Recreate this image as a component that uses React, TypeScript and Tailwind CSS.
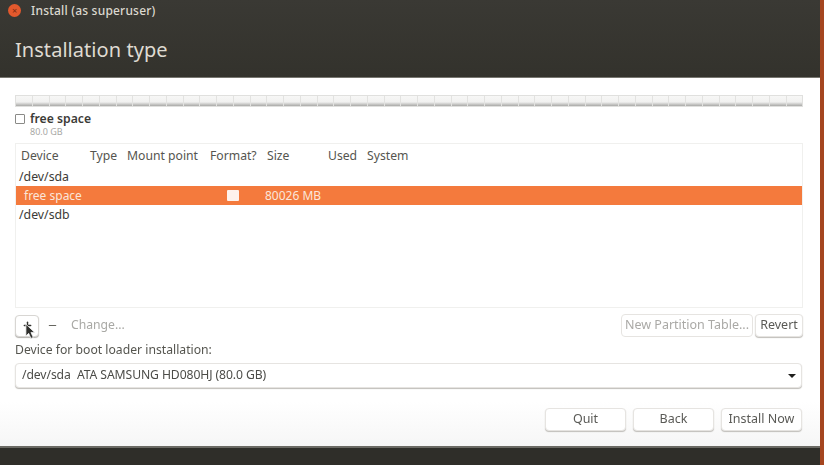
import { Plus, Minus } from "lucide-react";

const cells = Array.from({ length: 47 });

function Btn({ label, w, disabled }: { label: string; w: string; disabled?: boolean }) {
    return (
        <button className={`${w} h-[23px] rounded-[4px] border border-[#e6e4e1] bg-white text-[12.5px] leading-none shadow-[0_1px_1px_#c0beba] ${disabled ? "text-[#aaa9a6] shadow-none" : "text-[#5a5a56]"}`}>
            {label}
        </button>
    );
}

export default function App() {
    return (
        <div className="flex h-[465px] w-[824px] overflow-hidden font-['Noto_Sans',sans-serif] blur-[0.5px]">
            <div className="flex w-[820px] flex-col">
                <header className="flex h-[78px] shrink-0 flex-col border-b border-[#77766f] bg-gradient-to-b from-[#3a3934] to-[#33322c]">
                    <div className="flex h-[21px] items-center pl-[8px]">
                        <span className="flex h-[13px] w-[13px] items-center justify-center rounded-full bg-[#e2592d] text-[9px] leading-none text-[#7a2a12]">×</span>
                        <span className="ml-[10px] text-[12px] font-medium tracking-[0.2px] text-[#dcd9d0]">Install (as superuser)</span>
                    </div>
                    <h1 className="ml-[15px] mt-[16px] text-[20px] leading-[26px] tracking-[0.05px] text-[#dfdbd2]">Installation type</h1>
                </header>

                <main className="flex min-h-0 flex-1 flex-col bg-gradient-to-b from-white from-[88%] to-[#f6f6f6] px-[15px] pt-[17px]">
                    <div className="flex h-[12px] w-[788px] shrink-0 border border-[#e0e0de] bg-gradient-to-b from-[#f7f7f6] via-[#f1f1f0] via-60% to-[#a9a9a7]">
                        {cells.map((_, i) => (
                            <div key={i} className="flex-1 border-r border-[#e2e2e0] last:border-r-0" />
                        ))}
                    </div>

                    <div className="mt-[5px] flex h-[14px] items-center">
                        <span className="h-[10px] w-[10px] rounded-[1px] border border-[#8a8a87] bg-white" />
                        <span className="ml-[5px] text-[12.2px] font-semibold leading-[14px] text-[#3c3b37]">free space</span>
                    </div>
                    <div className="ml-[15px] mt-[1px] text-[9px] leading-[10px] text-[#a8a8a5]">80.0 GB</div>

                    <div className="mt-[6px] h-[165px] w-[788px] shrink-0 border border-[#f0f0ee] bg-white text-[12.2px] text-[#55554f]">
                        <div className="grid h-[21px] grid-cols-[69px_37px_83px_57px_61px_39px_1fr] items-end pl-[5px]">
                            <span>Device</span>
                            <span>Type</span>
                            <span>Mount point</span>
                            <span>Format?</span>
                            <span>Size</span>
                            <span>Used</span>
                            <span>System</span>
                        </div>
                        <div className="flex h-[21px] items-end pl-[3px] text-[12.3px] text-[#3c3b37]">/dev/sda</div>
                        <div className="grid h-[19px] grid-cols-[203px_38px_1fr] items-center bg-[#f47a3d] pl-[8px] text-[12px] text-[#fbe6da]">
                            <span>free space</span>
                            <span className="h-[11px] w-[12px] rounded-[1px] bg-white/90" />
                            <span>80026 MB</span>
                        </div>
                        <div className="flex h-[19px] items-end pl-[3px] text-[12.3px] text-[#3c3b37]">/dev/sdb</div>
                    </div>

                    <div className="mt-[6px] flex h-[23px] w-[788px] shrink-0 items-center">
                        <button className="relative flex h-[22px] w-[24px] items-center justify-center rounded-[4px] border border-[#d8d6d3] bg-white shadow-[0_1px_1px_#b5b3af]">
                            <Plus size={11} strokeWidth={3} className="text-[#33332f]" />
                            <svg viewBox="0 0 12 18" className="absolute left-[9px] top-[7px] h-[17px] w-[11px]">
                                <path d="M1 1 L1 14 L4 11 L6.5 16.5 L9 15.5 L6.5 10 L10.5 10 Z" fill="#2e2e2b" stroke="#f2f2f2" strokeWidth="0.9" />
                            </svg>
                        </button>
                        <Minus size={11} strokeWidth={2.5} className="ml-[8px] text-[#66665f]" />
                        <span className="ml-[13px] text-[12.2px] text-[#a9a9a5]">Change...</span>
                        <div className="ml-auto flex gap-[2px]">
                            <Btn label="New Partition Table..." w="w-[132px]" disabled />
                            <Btn label="Revert" w="w-[48px]" />
                        </div>
                    </div>

                    <div className="mt-[5px] text-[12.2px] leading-[16px] text-[#55554f]">Device for boot loader installation:</div>

                    <div className="mt-[5px] flex h-[25px] w-[787px] shrink-0 items-center justify-between rounded-[4px] border border-[#e6e4e1] bg-white px-[6px] shadow-[0_1px_1px_#c0beba]">
                        <span className="text-[12.2px] tracking-[-0.1px] text-[#4c4c48]">/dev/sda&nbsp; ATA SAMSUNG HD080HJ (80.0 GB)</span>
                        <span className="mr-[-1px] h-0 w-0 border-x-[4px] border-t-[4px] border-x-transparent border-t-[#1f1f1d]" />
                    </div>

                    <div className="mt-[20px] flex w-[787px] justify-end gap-[7px]">
                        <Btn label="Quit" w="w-[81px]" />
                        <Btn label="Back" w="w-[81px]" />
                        <Btn label="Install Now" w="w-[81px]" />
                    </div>
                </main>

                <footer className="h-[19px] shrink-0 border-t-2 border-[#6b6a64] bg-[#2f2e29]" />
            </div>
            <div className="w-[4px] bg-[#a5451f]" />
        </div>
    );
}
